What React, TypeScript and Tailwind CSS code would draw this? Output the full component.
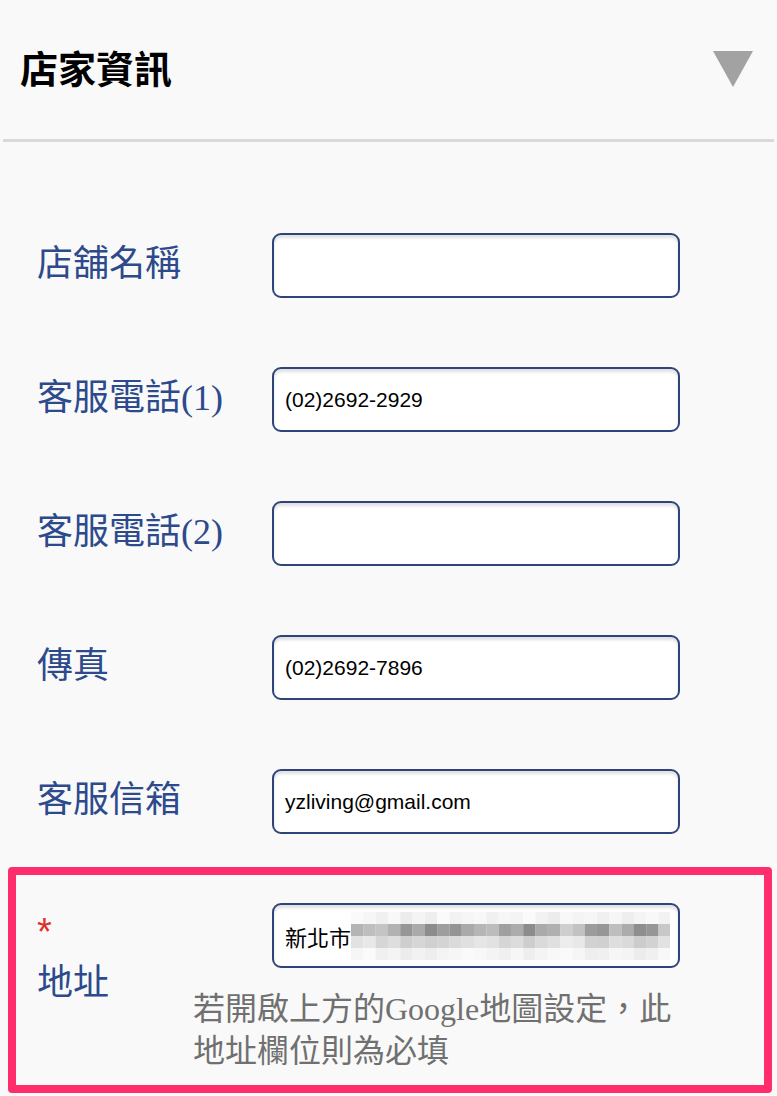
import React from 'react'

const label = "font-['Liberation_Serif','Noto_Sans_CJK_TC',serif] text-[36px] leading-none text-[#2c4a8c]"
const box =
  "shrink-0 w-[408px] h-[65px] rounded-[9px] border-2 border-[#2f4579] bg-white shadow-[inset_0_3px_3px_rgba(0,0,0,0.12)] flex items-center pl-[11px] font-['Liberation_Sans','Noto_Sans_CJK_TC',sans-serif] text-[21px] text-black"

const rows = [
  { name: '店舖名稱', value: '' },
  { name: '客服電話(1)', value: '(02)2692-2929' },
  { name: '客服電話(2)', value: '' },
  { name: '傳真', value: '(02)2692-7896' },
  { name: '客服信箱', value: 'yzliving@gmail.com' },
]

// pixelated blur over the street part of the address
const blur = [
  [250, 246, 240, 248, 236, 244, 238, 250, 242, 246, 248, 240, 246, 244, 250, 242, 236, 248, 244, 246, 240, 246, 238, 244, 248, 242],
  [180, 190, 196, 178, 150, 170, 140, 158, 148, 170, 182, 188, 160, 172, 140, 170, 176, 206, 194, 156, 150, 190, 172, 142, 150, 200],
  [226, 232, 214, 222, 206, 214, 208, 212, 218, 224, 230, 226, 214, 220, 206, 218, 224, 236, 232, 210, 208, 222, 218, 204, 210, 226],
  [246, 250, 240, 244, 236, 242, 238, 244, 246, 250, 248, 244, 240, 246, 238, 244, 248, 250, 246, 238, 240, 246, 244, 236, 240, 248],
]

function Blur() {
  return (
    <svg width="319" height="48" viewBox="0 0 319 48" className="block">
      {blur.map((r, y) =>
        r.map((v, x) => (
          <rect key={`${x}-${y}`} x={x * 12.3} y={y * 12} width="12.4" height="12" fill={`rgb(${v},${v},${v})`} />
        ))
      )}
    </svg>
  )
}

export default function App() {
  return (
    <div className="min-h-[1096px] w-[777px] bg-[#f9f9f9] overflow-hidden">
      <div className="h-[139px] flex items-center justify-between pl-[20px] pr-[24px]">
        <h2 className="font-['Noto_Sans_CJK_TC',sans-serif] font-bold text-[38px] leading-none text-black -mt-[6px]">
          店家資訊
        </h2>
        <svg width="40" height="36" viewBox="0 0 40 36" className="-mt-[2px]">
          <polygon points="0,0 40,0 20,36" fill="#a2a2a2" />
        </svg>
      </div>
      <div className="mx-[3px] h-[3px] bg-[#ddd8d8]" />

      <div className="mt-[91px] flex flex-col gap-[69px]">
        {rows.map((r) => (
          <div key={r.name} className="flex items-center">
            <div className={`w-[272px] shrink-0 pl-[37px] ${label} -mt-[4px]`}>{r.name}</div>
            <div className={box}>{r.value}</div>
          </div>
        ))}
      </div>

      <div className="mt-[33px] ml-[8px] w-[764px] h-[226px] border-[8px] border-[#ff2d6b] rounded-[4px] flex pl-[21px] pt-[28px]">
        <div className="w-[156px] shrink-0 flex flex-col">
          <span className="mt-[10px] text-[38px] leading-none text-[#e0302c] font-['Liberation_Sans',sans-serif]">*</span>
          <span className={`${label} mt-[14px]`}>地址</span>
        </div>
        <div className="flex flex-col">
          <div className={`${box} ml-[79px]`}>
            <span className="font-['Noto_Sans_CJK_TC',sans-serif] text-[22px] leading-none">新北市</span>
            <Blur />
          </div>
          <p className="mt-[20px] w-[490px] font-['Liberation_Serif','Noto_Sans_CJK_TC',serif] text-[32px] leading-[42px] text-[#707070]">
            若開啟上方的Google地圖設定，此地址欄位則為必填
          </p>
        </div>
      </div>
    </div>
  )
}
